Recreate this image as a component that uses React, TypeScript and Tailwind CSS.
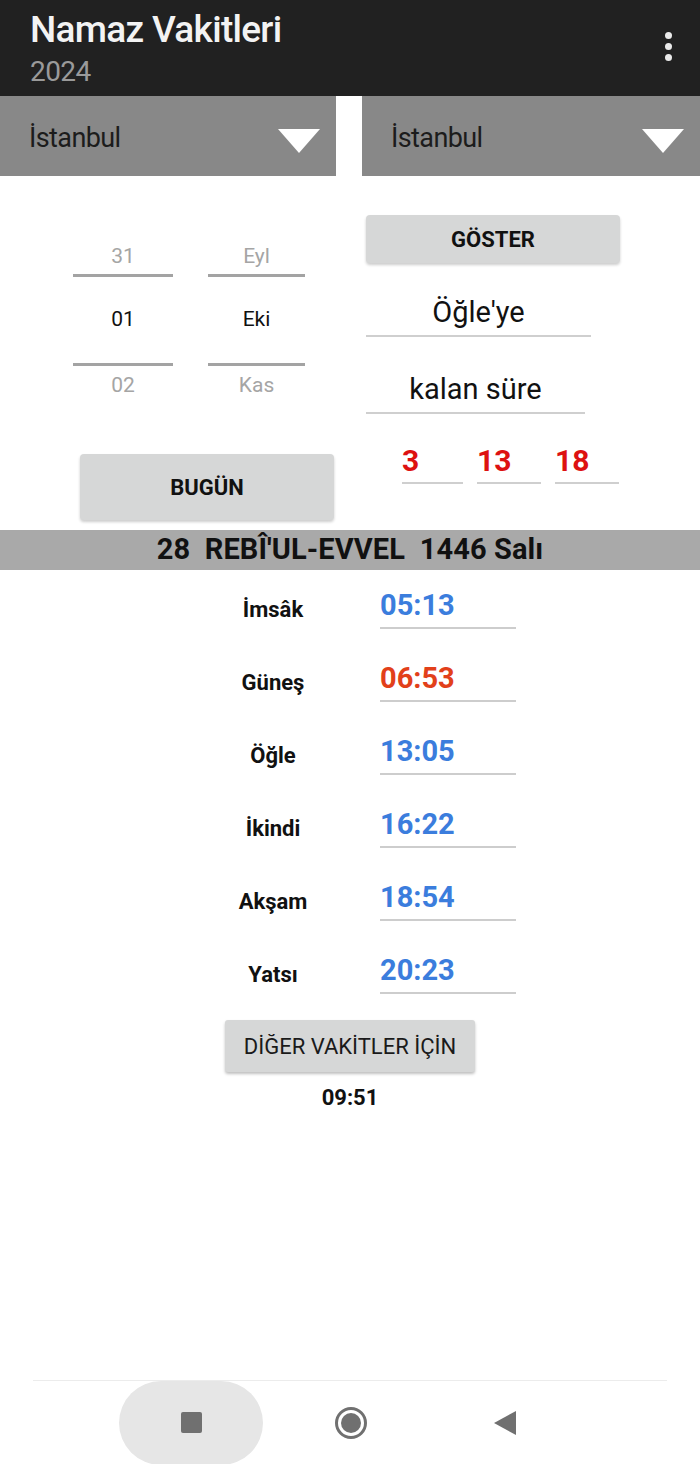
// App.tsx
// Namaz Vakitleri screen: city spinners, date picker, countdown and daily prayer times.

const FONT = { fontFamily: "Roboto, 'Noto Sans', sans-serif" };

type Vakit = { name: string; time: string; color: string };

const VAKITLER: Vakit[] = [
  { name: "İmsâk", time: "05:13", color: "text-[#3b7ddd]" },
  { name: "Güneş", time: "06:53", color: "text-[#e2401a]" },
  { name: "Öğle", time: "13:05", color: "text-[#3b7ddd]" },
  { name: "İkindi", time: "16:22", color: "text-[#3b7ddd]" },
  { name: "Akşam", time: "18:54", color: "text-[#3b7ddd]" },
  { name: "Yatsı", time: "20:23", color: "text-[#3b7ddd]" },
];

function Spinner({ label, className }: { label: string; className: string }) {
  return (
    <div className={`h-[80px] bg-[#888888] flex items-center justify-between pl-[29px] ${className}`}>
      <span className="text-[27px] text-[#1c1c1c] tracking-[-0.6px] mt-[4px]">{label}</span>
      <svg className="mt-[10px]" width="42" height="24" viewBox="0 0 42 24">
        <polygon points="0,0 42,0 21,24" fill="#fff" />
      </svg>
    </div>
  );
}

// One column of the number picker (previous / current / next)
function PickerColumn({ prev, cur, next, width }: { prev: string; cur: string; next: string; width: string }) {
  return (
    <div className={`flex flex-col items-center ${width}`}>
      <div className="h-[34px] flex items-center text-[21px] text-[#a5a5a5]">{prev}</div>
      <div className="w-full h-[3px] bg-[#a3a3a3]" />
      <div className="h-[86px] flex items-center text-[21px] text-[#111]">{cur}</div>
      <div className="w-full h-[3px] bg-[#a3a3a3]" />
      <div className="h-[34px] flex items-start pt-[4px] text-[21px] text-[#a5a5a5]">{next}</div>
    </div>
  );
}

function Countdown({ value, width }: { value: string; width: string }) {
  return (
    <div className={`${width} h-[50px] border-b-2 border-[#cfcfcf] flex items-center pt-[4px] text-[30px] font-bold text-[#dd1111]`}>
      {value}
    </div>
  );
}

export default function App() {
  return (
    <div className="w-[700px] h-[1464px] bg-white flex flex-col overflow-hidden" style={FONT}>
      {/* App bar */}
      <header className="h-[96px] bg-[#212121] flex justify-between pl-[30px] pr-[28px] shrink-0">
        <div className="flex flex-col pt-[8px]">
          <span className="text-[37px] leading-[44px] font-medium text-[#f3f3f3] tracking-[-0.7px]">Namaz Vakitleri</span>
          <span className="text-[28px] leading-[34px] text-[#9a9a9a] tracking-[-0.6px] mt-[3px]">2024</span>
        </div>
        <div className="flex flex-col gap-[4px] pt-[32px]">
          <span className="w-[7px] h-[7px] rounded-full bg-[#eaeaea]" />
          <span className="w-[7px] h-[7px] rounded-full bg-[#eaeaea]" />
          <span className="w-[7px] h-[7px] rounded-full bg-[#eaeaea]" />
        </div>
      </header>

      {/* City spinners */}
      <div className="flex justify-between shrink-0">
        <Spinner label="İstanbul" className="w-[336px] pr-[16px]" />
        <Spinner label="İstanbul" className="w-[338px] pr-[16px]" />
      </div>

      {/* Date picker + countdown */}
      <div className="h-[354px] flex shrink-0">
        <div className="w-[366px] flex flex-col">
          <div className="flex gap-[35px] pl-[73px] pt-[64px]">
            <PickerColumn prev="31" cur="01" next="02" width="w-[100px]" />
            <PickerColumn prev="Eyl" cur="Eki" next="Kas" width="w-[97px]" />
          </div>
          <button className="ml-[80px] mt-[54px] w-[254px] h-[66px] rounded-[4px] bg-[#d6d7d7] shadow-[0_2px_3px_rgba(0,0,0,0.2)] text-[22px] font-bold text-[#111]">
            BUGÜN
          </button>
        </div>
        <div className="flex-1 flex flex-col">
          <button className="mt-[39px] w-[254px] h-[48px] rounded-[4px] bg-[#d6d7d7] shadow-[0_2px_3px_rgba(0,0,0,0.2)] text-[22px] font-bold text-[#111]">
            GÖSTER
          </button>
          <div className="mt-[20px] w-[225px] h-[54px] border-b-2 border-[#cfcfcf] flex items-center justify-center pt-[8px] text-[29px] text-[#111]">
            Öğle'ye
          </div>
          <div className="mt-[23px] w-[219px] h-[54px] border-b-2 border-[#cfcfcf] flex items-center justify-center pt-[8px] text-[29px] text-[#111]">
            kalan süre
          </div>
          <div className="mt-[20px] flex pl-[36px] gap-[14px]">
            <Countdown value="3" width="w-[61px]" />
            <Countdown value="13" width="w-[64px]" />
            <Countdown value="18" width="w-[64px]" />
          </div>
        </div>
      </div>

      {/* Hijri date bar */}
      <div className="h-[40px] bg-[#a9a9a9] flex items-center justify-center shrink-0">
        <span className="text-[29px] font-bold text-[#111] tracking-[0.1px] whitespace-pre">28  REBÎ'UL-EVVEL  1446 Salı</span>
      </div>

      {/* Prayer times */}
      <div className="flex flex-col pt-[12px]">
        {VAKITLER.map((v) => (
          <div key={v.name} className="h-[73px] flex">
            <div className="w-[380px] flex justify-center pl-[166px]">
              <span className="mt-[11px] text-[22px] font-bold text-[#111] whitespace-nowrap">{v.name}</span>
            </div>
            <div className={`w-[136px] h-[47px] border-b-2 border-[#cdcdcd] flex items-center pt-[2px] text-[29px] font-bold ${v.color}`}>
              {v.time}
            </div>
          </div>
        ))}
      </div>

      <div className="flex flex-col items-center">
        <button className="mt-[0px] w-[250px] h-[52px] rounded-[3px] bg-[#d6d7d7] shadow-[0_2px_3px_rgba(0,0,0,0.25)] text-[22px] text-[#1a1a1a]">
          DİĞER VAKİTLER İÇİN
        </button>
        <span className="mt-[9px] text-[22px] font-bold text-[#111]">09:51</span>
      </div>

      <div className="flex-1" />

      {/* System navigation bar */}
      <div className="h-[84px] mx-[33px] border-t border-[#ececec] flex items-center shrink-0">
        <div className="ml-[86px] w-[144px] h-[84px] rounded-[42px] bg-[#e6e6e6] flex items-center justify-center">
          <span className="w-[21px] h-[21px] rounded-[2px] bg-[#707070]" />
        </div>
        <div className="ml-[72px] w-[32px] h-[32px] rounded-full border-[3px] border-[#707070] flex items-center justify-center">
          <span className="w-[20px] h-[20px] rounded-full bg-[#707070]" />
        </div>
        <svg className="ml-[127px]" width="22" height="24" viewBox="0 0 22 24">
          <polygon points="22,0 22,24 0,12" fill="#707070" strokeLinejoin="round" />
        </svg>
      </div>
    </div>
  );
}
